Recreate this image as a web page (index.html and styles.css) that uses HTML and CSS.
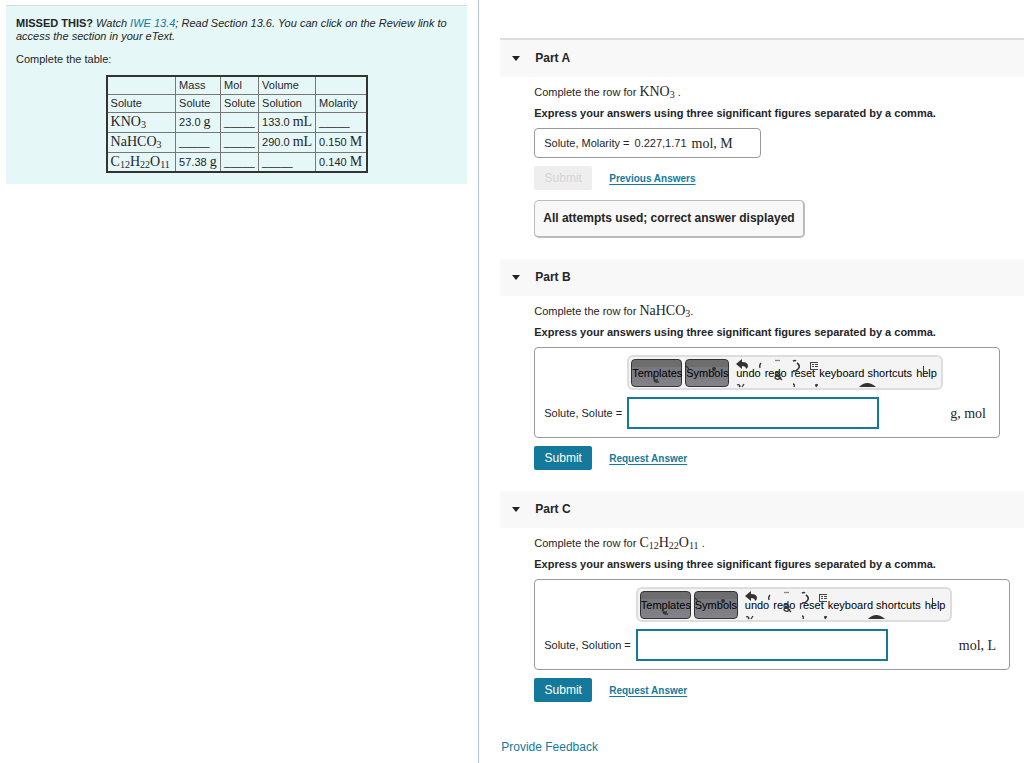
FILE: index.html
```html
<!DOCTYPE html>
<html lang="en">
<head>
<meta charset="utf-8">
<title>Molarity table</title>
<link rel="stylesheet" href="styles.css">
</head>
<body>
<svg class="defs" aria-hidden="true">
  <symbol id="tool-marks" viewBox="0 0 316 35">
    <g fill="none" stroke="#333" stroke-width="1.3">
      <path d="M27 20v4q0 3 3 3h2M28 25h3"/>
      <path d="M59 11l3 3"/>
      <path d="M134 8q-2 2-1 5"/>
      <path d="M148 5.500h5" stroke="#888"/>
      <path d="M148 17q5 1 5 3q-5 0-5 3q3 3 6-1M149 19l6 6"/>
      <path d="M166 6q2-1 3 0M170 8q4 3 1 6q-1 2-5 2" stroke-width="1.600"/>
      <path d="M110 30q2-1 3 1l-1 1M117 29l-2 3M166 29q2 0 1 3M188 30h3M190 29l-1 3"/>
      <path d="M296.500 11v11" stroke-width="1"/>
    </g>
    <path fill="#333" d="M109 9l6-5v3q6 0 6 4q0 2-2 3q0-3-4-3v3zM232 32q8-8 17 0z"/>
    <circle cx="87" cy="14" r="2" fill="#333"/>
    <path d="M183 7h8v1h-8zM183 7h1v8h-1zM185 9h2v1h-2zM188 9h3v1h-3zM185 11h2v1h-2zM188 11h3v1h-3zM184 14h7v1h-7z" fill="#444"/>
  </symbol>
</svg>
<div class="page">
  <aside class="intro">
    <div class="intro-box">
      <p><strong>MISSED THIS?</strong> <em>Watch <a href="#">IWE 13.4</a>; Read Section 13.6. You can click on the Review link to access the section in your eText.</em></p>
      <p>Complete the table:</p>
      <table class="solutes">
        <colgroup><col class="c1"><col class="c2"><col class="c3"><col class="c4"><col class="c5"></colgroup>
        <tr><th></th><th>Mass</th><th>Mol</th><th>Volume</th><th></th></tr>
        <tr><th>Solute</th><th>Solute</th><th>Solute</th><th>Solution</th><th>Molarity</th></tr>
        <tr><td class="math">KNO<sub>3</sub></td><td>23.0 <span class="math">g</span></td><td>_____</td><td>133.0 <span class="math">mL</span></td><td>_____</td></tr>
        <tr><td class="math">NaHCO<sub>3</sub></td><td>_____</td><td>_____</td><td>290.0 <span class="math">mL</span></td><td>0.150 <span class="math">M</span></td></tr>
        <tr><td class="math">C<sub>12</sub>H<sub>22</sub>O<sub>11</sub></td><td>57.38 <span class="math">g</span></td><td>_____</td><td>_____</td><td>0.140 <span class="math">M</span></td></tr>
      </table>
    </div>
  </aside>
  <main class="parts">
    <section class="part">
      <h2 class="part-head first"><span class="caret"></span>Part A</h2>
      <div class="part-body">
        <p>Complete the row for <span class="math">KNO<sub>3</sub></span> .</p>
        <p class="direction">Express your answers using three significant figures separated by a comma.</p>
        <div class="given"><span>Solute, Molarity =</span><span>0.227,1.71</span><span class="math">mol, M</span></div>
        <div class="actions"><button class="submit" disabled>Submit</button><a href="#">Previous Answers</a></div>
        <div class="notice">All attempts used; correct answer displayed</div>
      </div>
    </section>
    <section class="part">
      <h2 class="part-head"><span class="caret"></span>Part B</h2>
      <div class="part-body">
        <p>Complete the row for <span class="math">NaHCO<sub>3</sub></span>.</p>
        <p class="direction">Express your answers using three significant figures separated by a comma.</p>
        <div class="answer">
          <div class="toolbar">
            <button class="key">Templates</button><button class="key">Symbols</button>
            <button class="tool">undo</button><button class="tool">redo</button><button class="tool">reset</button><button class="tool">keyboard shortcuts</button><button class="tool">help</button>
            <svg class="marks" aria-hidden="true"><use href="#tool-marks"/></svg>
          </div>
          <label for="answer-b">Solute, Solute =</label>
          <input id="answer-b" type="text">
          <span class="math unit">g, mol</span>
        </div>
        <div class="actions"><button class="submit">Submit</button><a href="#">Request Answer</a></div>
      </div>
    </section>
    <section class="part">
      <h2 class="part-head"><span class="caret"></span>Part C</h2>
      <div class="part-body">
        <p>Complete the row for <span class="math">C<sub>12</sub>H<sub>22</sub>O<sub>11</sub></span> .</p>
        <p class="direction">Express your answers using three significant figures separated by a comma.</p>
        <div class="answer">
          <div class="toolbar">
            <button class="key">Templates</button><button class="key">Symbols</button>
            <button class="tool">undo</button><button class="tool">redo</button><button class="tool">reset</button><button class="tool">keyboard shortcuts</button><button class="tool">help</button>
            <svg class="marks" aria-hidden="true"><use href="#tool-marks"/></svg>
          </div>
          <label for="answer-c">Solute, Solution =</label>
          <input id="answer-c" type="text">
          <span class="math unit">mol, L</span>
        </div>
        <div class="actions"><button class="submit">Submit</button><a href="#">Request Answer</a></div>
      </div>
    </section>
    <a class="feedback" href="#">Provide Feedback</a>
  </main>
</div>
</body>
</html>
```
FILE: styles.css
```css
* { box-sizing: border-box; }
body {
  margin: 0;
  background: #fff;
  color: #252525;
  font: 11px/13px "Liberation Sans", Arial, sans-serif;
}
a { color: #147a9c; }
p { margin: 0; }
button { font-family: inherit; }
.defs { display: none; }
.page {
  display: grid;
  grid-template-columns: 468fr 532fr;
  min-height: 100vh;
}

.intro {
  padding: 5px 11px 0 6px;
  border-right: 1px solid #b4c4dc;
}
.intro-box {
  padding: 11px 10px;
  border-top: 1px solid #d5dcdf;
  background: #e6f7f8;
}
.intro-box p { margin-bottom: 10px; }
.intro-box p + p { margin-bottom: 9px; }
.intro-box a { text-decoration: none; }
.math {
  font-family: "Liberation Serif", "Times New Roman", serif;
  font-size: 14px;
}
sub {
  font-size: 10px;
  line-height: 0;
  vertical-align: -2px;
}
.solutes {
  margin: 0 auto;
  border-collapse: collapse;
  border: 2px solid #333;
  table-layout: fixed;
  width: 260px;
}
.c1 { width: 69px; }
.c2 { width: 45px; }
.c3 { width: 38px; }
.c4 { width: 57px; }
.c5 { width: 51px; }
.solutes th, .solutes td {
  height: 20px;
  padding: 0 3px;
  border: 1px solid #777;
  font-weight: 400;
  line-height: 16px;
  text-align: left;
  white-space: nowrap;
}
.solutes th { height: 18px; }

.parts {
  padding: 38px 0 8px 21px;
  min-width: 0;
}
.part-head {
  display: flex;
  align-items: center;
  gap: 15px;
  height: 37px;
  margin: 0;
  padding-left: 12px;
  background: #f8f8f8;
  font-size: 12px;
}
.part-head.first {
  height: 39px;
  border-top: 2px solid #dcdcdc;
}
.caret {
  border: 4px solid transparent;
  border-top: 5px solid #222;
  border-bottom: 0;
}
.part-body {
  padding: 6px 14px 21px 34px;
}
.part-body p { line-height: 18px; }
.part-body .direction {
  padding: 3px 0 6px;
  font-weight: 700;
}
.given {
  display: flex;
  align-items: center;
  gap: 5px;
  width: 227px;
  height: 30px;
  padding-left: 9px;
  border: 1px solid #999;
  border-radius: 4px;
}
.actions {
  display: flex;
  align-items: center;
  gap: 17px;
  padding-top: 8px;
}
.actions a {
  font-size: 10px;
  font-weight: 700;
  text-underline-offset: 2px;
}
.submit {
  width: 58px;
  height: 24px;
  padding: 0;
  border: 0;
  border-radius: 2px;
  background: #147a9c;
  color: #fff;
  font-size: 12px;
}
.submit:disabled {
  background: #eee;
  color: #d5d5d5;
}
.notice {
  width: max-content;
  margin-top: 10px;
  padding: 10px 8px;
  border: 1px solid #bbb;
  border-right-width: 2px;
  border-bottom-width: 2px;
  border-radius: 5px;
  background: #f8f8f8;
  font-size: 12px;
  font-weight: 700;
  line-height: 15px;
}
.answer {
  display: grid;
  grid-template-columns: auto 252px 61px auto;
  width: max-content;
  gap: 7px 5px;
  align-items: center;
  padding: 7px 13px 8px 9px;
  border: 1px solid #999;
  border-radius: 4px;
}
.toolbar {
  position: relative;
  grid-column: 2 / 4;
  display: flex;
  align-items: center;
  width: 316px;
  height: 35px;
  padding: 0 2px;
  border: 2px solid #ddd;
  border-radius: 6px;
  background: #f4f4f4;
}
.key {
  flex: none;
  width: 51px;
  height: 28px;
  margin-right: 3px;
  padding: 0;
  border: 1px solid #333;
  border-radius: 4px;
  background: linear-gradient(#6d6d6d 25%, #77777d 25%, #828288);
  color: #000;
  font-size: 11px;
}
.key + .key { width: 44px; margin-right: 7px; }
.tool {
  flex: none;
  margin-right: 4px;
  padding: 0;
  border: 0;
  background: none;
  color: #000;
  font-size: 11px;
  white-space: nowrap;
}
.marks {
  position: absolute;
  left: -2px;
  top: -2px;
  width: 316px;
  height: 35px;
  pointer-events: none;
}
.answer label { grid-column: 1; }
.answer input {
  width: 252px;
  height: 32px;
  padding: 0 6px;
  border: 2px solid #147a9c;
  border-radius: 0;
  background: #fff;
  font: inherit;
}
.unit { grid-column: 4; }
.feedback {
  display: inline-block;
  margin: 18px 0 0 1px;
  font-size: 12px;
  text-decoration: none;
}
```
